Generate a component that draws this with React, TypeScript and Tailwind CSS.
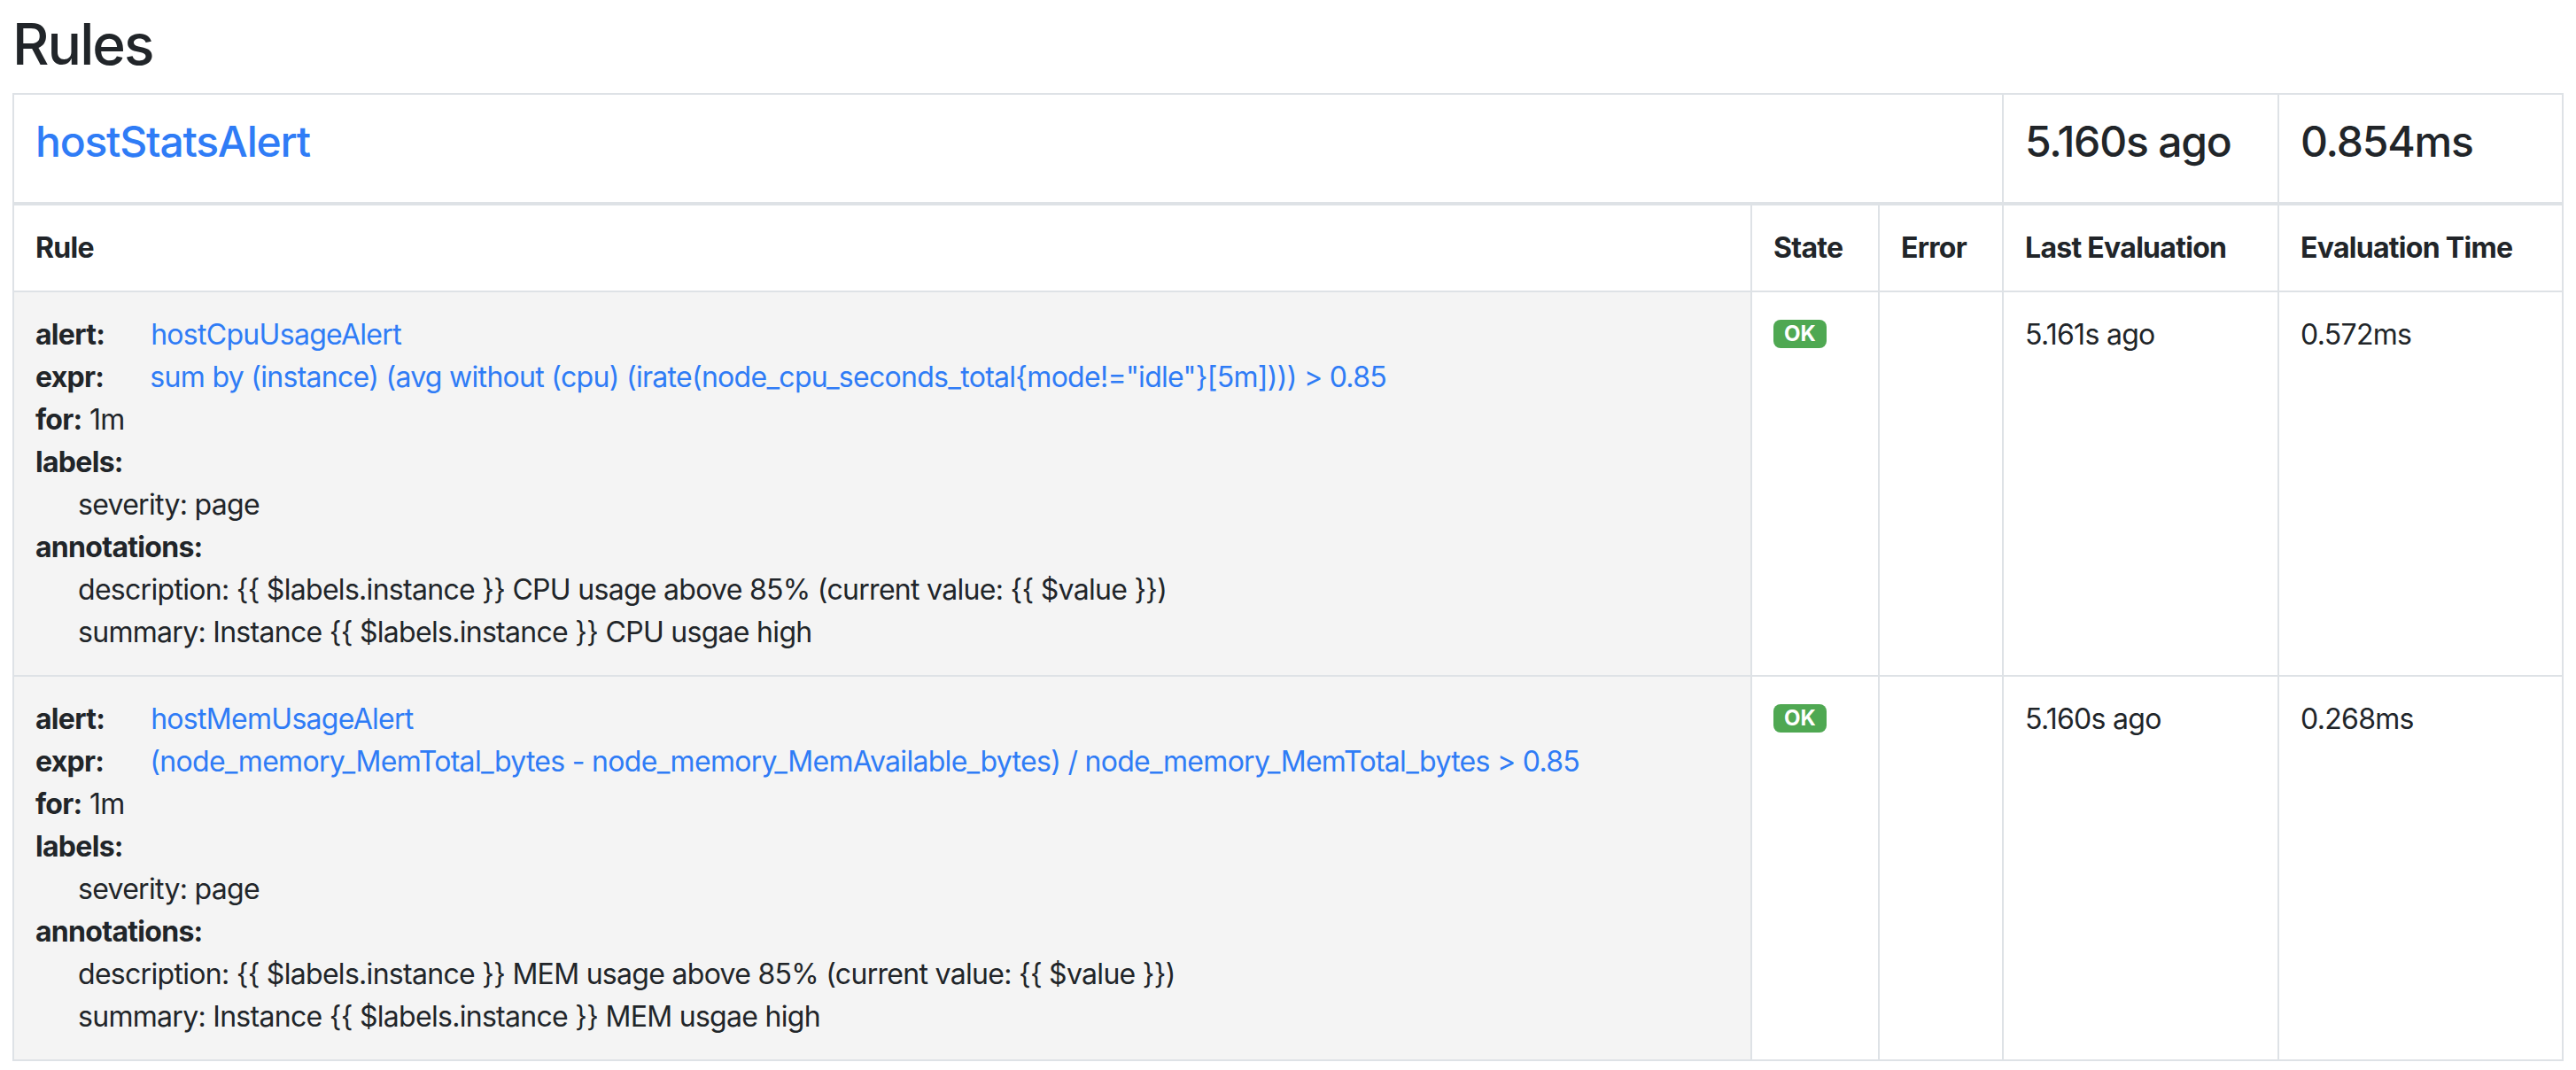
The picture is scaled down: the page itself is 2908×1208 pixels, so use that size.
import React from 'react';

type Rule = {
  alert: string;
  expr: string;
  duration: string;
  labels: [string, string][];
  annotations: [string, string][];
  state: string;
  lastEvaluation: string;
  evaluationTime: string;
};

const rules: Rule[] = [
  {
    alert: 'hostCpuUsageAlert',
    expr: 'sum by (instance) (avg without (cpu) (irate(node_cpu_seconds_total{mode!="idle"}[5m]))) > 0.85',
    duration: '1m',
    labels: [['severity', 'page']],
    annotations: [
      ['description', '{{ $labels.instance }} CPU usage above 85% (current value: {{ $value }})'],
      ['summary', 'Instance {{ $labels.instance }} CPU usgae high'],
    ],
    state: 'OK',
    lastEvaluation: '5.161s ago',
    evaluationTime: '0.572ms',
  },
  {
    alert: 'hostMemUsageAlert',
    expr: '(node_memory_MemTotal_bytes - node_memory_MemAvailable_bytes) / node_memory_MemTotal_bytes > 0.85',
    duration: '1m',
    labels: [['severity', 'page']],
    annotations: [
      ['description', '{{ $labels.instance }} MEM usage above 85% (current value: {{ $value }})'],
      ['summary', 'Instance {{ $labels.instance }} MEM usgae high'],
    ],
    state: 'OK',
    lastEvaluation: '5.160s ago',
    evaluationTime: '0.268ms',
  },
];

const cell = 'border-2 border-[#dee2e6] p-[24px] align-top';
const heading = 'text-[48px] leading-[57.6px] font-medium mb-[16px] tracking-[-0.025em]';

const App = () => {
  return (
    <div className="min-h-screen bg-white px-[14px] pt-[12px] text-[#212529] text-[32px] leading-[48px] tracking-[-0.022em] font-['Inter','Liberation_Sans',sans-serif]">
      <h2 className="text-[64px] leading-[76.8px] font-medium mb-[16px] tracking-[-0.03em]">Rules</h2>

      <table className="w-full table-fixed border-collapse border-2 border-[#dee2e6]">
        <colgroup>
          <col className="w-[1962px]" />
          <col className="w-[144px]" />
          <col className="w-[140px]" />
          <col className="w-[311px]" />
          <col />
        </colgroup>
        <thead>
          <tr>
            <td colSpan={3} className={`${cell} border-b-4`}>
              <a href="#hostStatsAlert" className="text-[#2f7cf6] no-underline">
                <h4 className={heading}>hostStatsAlert</h4>
              </a>
            </td>
            <td className={`${cell} border-b-4`}>
              <h4 className={heading}>5.160s ago</h4>
            </td>
            <td className={`${cell} border-b-4`}>
              <h4 className={heading}>0.854ms</h4>
            </td>
          </tr>
        </thead>
        <tbody>
          <tr className="font-bold">
            <td className={cell}>Rule</td>
            <td className={cell}>State</td>
            <td className={cell}>Error</td>
            <td className={cell}>Last Evaluation</td>
            <td className={cell}>Evaluation Time</td>
          </tr>
          {rules.map((r) => (
            <tr key={r.alert}>
              <td className={`${cell} bg-[#f4f4f4]`}>
                <strong className="font-bold">alert:</strong>
                <a href="#" className="ml-[52px] text-[#2f7cf6] no-underline">{r.alert}</a>
                <br />
                <strong className="font-bold">expr:</strong>
                <a href="#" className="ml-[52px] text-[#2f7cf6] no-underline">{r.expr}</a>
                <br />
                <div>
                  <strong className="font-bold">for:</strong> {r.duration}
                </div>
                <div>
                  <strong className="font-bold">labels:</strong>
                  {r.labels.map(([k, v]) => (
                    <div key={k} className="ml-[48px]">
                      {k}: {v}
                    </div>
                  ))}
                </div>
                <div>
                  <strong className="font-bold">annotations:</strong>
                  {r.annotations.map(([k, v]) => (
                    <div key={k} className="ml-[48px]">
                      {k}: {v}
                    </div>
                  ))}
                </div>
              </td>
              <td className={cell}>
                <span className="inline-block bg-[#4fa852] text-white text-[24px] leading-[32px] font-bold px-[12px] rounded-[8px] align-[4px] tracking-normal">
                  {r.state}
                </span>
              </td>
              <td className={cell}></td>
              <td className={cell}>{r.lastEvaluation}</td>
              <td className={cell}>{r.evaluationTime}</td>
            </tr>
          ))}
        </tbody>
      </table>
    </div>
  );
};

export default App;
